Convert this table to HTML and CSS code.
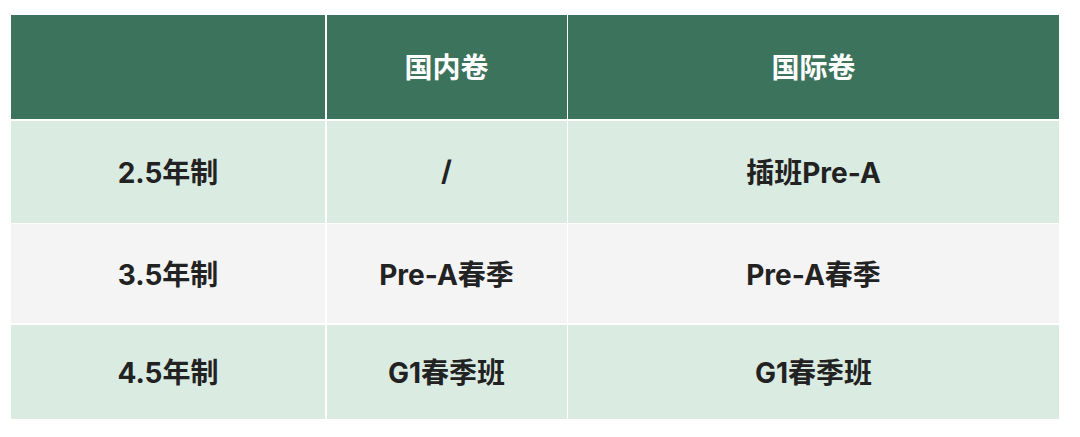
FILE: index.html
```html
<!DOCTYPE html>
<html lang="zh">
<head>
<meta charset="utf-8">
<link rel="stylesheet" href="styles.css">
</head>
<body>
<div class="table">
  <div class="cell head"></div>
  <div class="cell head">国内卷</div>
  <div class="cell head">国际卷</div>

  <div class="cell green">2.5年制</div>
  <div class="cell green">/</div>
  <div class="cell green">插班Pre-A</div>

  <div class="cell gray">3.5年制</div>
  <div class="cell gray">Pre-A春季</div>
  <div class="cell gray">Pre-A春季</div>

  <div class="cell green">4.5年制</div>
  <div class="cell green">G1春季班</div>
  <div class="cell green">G1春季班</div>
</div>
</body>
</html>
```

FILE: styles.css
```css
html, body {
  margin: 0;
  padding: 0;
  background: #ffffff;
}
body {
  padding: 15px 0 0 11px;
  font-family: "Inter", "Noto Sans CJK SC", sans-serif;
}
.table {
  width: 1048px;
  display: grid;
  grid-template-columns: 314px 240px 1fr;
  grid-template-rows: 104px 102px 99px 94px;
  gap: 1.5px;
  background: #ffffff;
}
.cell {
  display: flex;
  align-items: center;
  justify-content: center;
  font-size: 28px;
  font-weight: 700;
  color: #222222;
  padding-bottom: 2px;
}
.head {
  background: #3c735d;
  color: #ffffff;
}
.green {
  background: #daebe2;
}
.gray {
  background: #f4f4f4;
}
```
